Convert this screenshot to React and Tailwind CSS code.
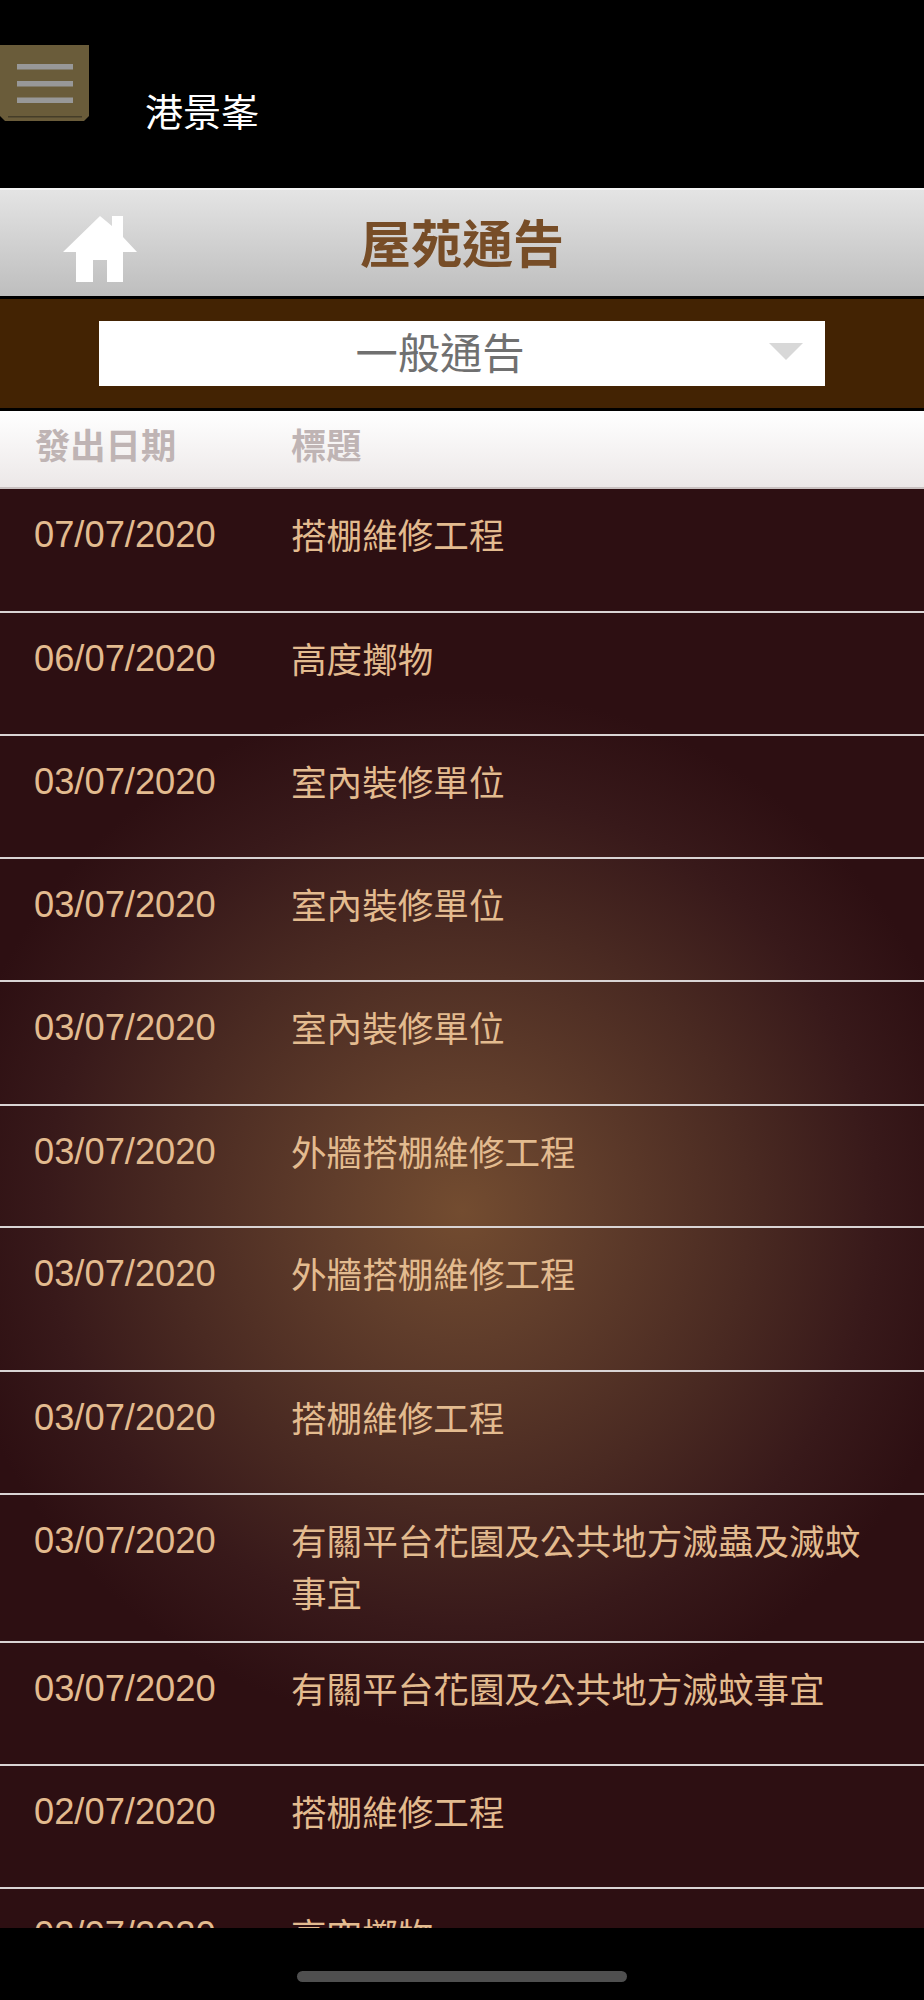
const notices = [
  { date: '07/07/2020', title: '搭棚維修工程', height: 'h-[124px]' },
  { date: '06/07/2020', title: '高度擲物', height: 'h-[123px]' },
  { date: '03/07/2020', title: '室內裝修單位', height: 'h-[123px]' },
  { date: '03/07/2020', title: '室內裝修單位', height: 'h-[123px]' },
  { date: '03/07/2020', title: '室內裝修單位', height: 'h-[124px]' },
  { date: '03/07/2020', title: '外牆搭棚維修工程', height: 'h-[122px]' },
  { date: '03/07/2020', title: '外牆搭棚維修工程', height: 'h-[144px]' },
  { date: '03/07/2020', title: '搭棚維修工程', height: 'h-[123px]' },
  { date: '03/07/2020', title: '有關平台花園及公共地方滅蟲及滅蚊事宜', height: 'h-[148px]' },
  { date: '03/07/2020', title: '有關平台花園及公共地方滅蚊事宜', height: 'h-[123px]' },
  { date: '02/07/2020', title: '搭棚維修工程', height: 'h-[123px]' },
  { date: '02/07/2020', title: '高空擲物', height: 'h-[124px]' },
];

const cjk = "font-['Liberation_Sans','Noto_Sans_CJK_TC',sans-serif]";

function MenuIcon() {
  return (
    <svg viewBox="0 0 89 76" className="h-[76px] w-[89px]">
      <path d="M0 0 H89 V71 L84 76 H5 L0 71 Z" fill="#6a5c3a" />
      <rect x="8" y="71" width="74" height="1.5" fill="#453d28" />
      <rect x="17" y="19" width="56" height="5.5" fill="#989898" />
      <rect x="17" y="36" width="56" height="5.5" fill="#989898" />
      <rect x="17" y="52.5" width="56" height="5.5" fill="#989898" />
    </svg>
  );
}

function HomeIcon() {
  return (
    <svg viewBox="0 0 76 67" className="h-[67px] w-[76px]" fill="#fff">
      <path d="M38 0 L50 10 V0 H61 V21 L75 36 H61 V66 H45 V44 H31 V66 H14 V36 H1 Z" />
    </svg>
  );
}

export default function App() {
  return (
    <div className={`flex h-[2000px] w-[924px] flex-col overflow-hidden bg-black ${cjk}`}>
      {/* Top bar */}
      <div className="flex h-[188px] shrink-0 items-start">
        <div className="mt-[45px]">
          <MenuIcon />
        </div>
        <div className="ml-[56px] mt-[91px] text-[38px] leading-[44px] text-white">港景峯</div>
      </div>

      {/* Page title */}
      <div className="relative flex h-[108px] shrink-0 items-center justify-center border-t-2 border-[#f4f4f4] bg-gradient-to-b from-[#e4e4e4] to-[#bebebe] pt-[4px]">
        <div className="absolute left-[62px] top-[26px]">
          <HomeIcon />
        </div>
        <h1 className="text-[51px] font-bold leading-none text-[#774d27]">屋苑通告</h1>
      </div>

      {/* Category select */}
      <div className="flex h-[115px] shrink-0 items-center justify-center border-y-[3px] border-black bg-[#432303]">
        <div className="relative flex h-[65px] w-[726px] items-center justify-center bg-white pr-[44px] pt-[3px] text-[42.3px] text-[#707070]">
          一般通告
          <div className="absolute right-[22px] top-[22px] h-0 w-0 border-x-[17px] border-t-[17px] border-x-transparent border-t-[#d8d8d8]" />
        </div>
      </div>

      {/* Column headings */}
      <div className="flex h-[78px] shrink-0 items-center border-b-2 border-[#c9c1c1] bg-gradient-to-b from-white to-[#ece8e8] pb-[3px] text-[35.3px] font-bold text-[#bfb4b4]">
        <div className="w-[291px] pl-[35px]">發出日期</div>
        <div>標題</div>
      </div>

      {/* Notices */}
      <div className="min-h-0 flex-1 overflow-hidden bg-[#2d0f12] bg-[radial-gradient(circle_520px_at_462px_722px,#734c30_0%,#603d2b_25%,#4a2a22_55%,#38191a_80%,#2d0f12_100%)] bg-no-repeat">
        {notices.map((notice, index) => (
          <div key={index} className={`flex ${notice.height} border-b-2 border-[#d9d4d4] text-[#e3bb8f]`}>
            <div className="w-[291px] shrink-0 pl-[34px] pt-[25px] text-[36.3px] leading-[42px]">{notice.date}</div>
            <div className="w-[600px] pt-[22px] text-[35.6px] leading-[52px]">{notice.title}</div>
          </div>
        ))}
      </div>

      {/* Home indicator */}
      <div className="flex h-[72px] shrink-0 justify-center pt-[43px]">
        <div className="h-[11px] w-[330px] rounded-full bg-[#4f4f4f]" />
      </div>
    </div>
  );
}
